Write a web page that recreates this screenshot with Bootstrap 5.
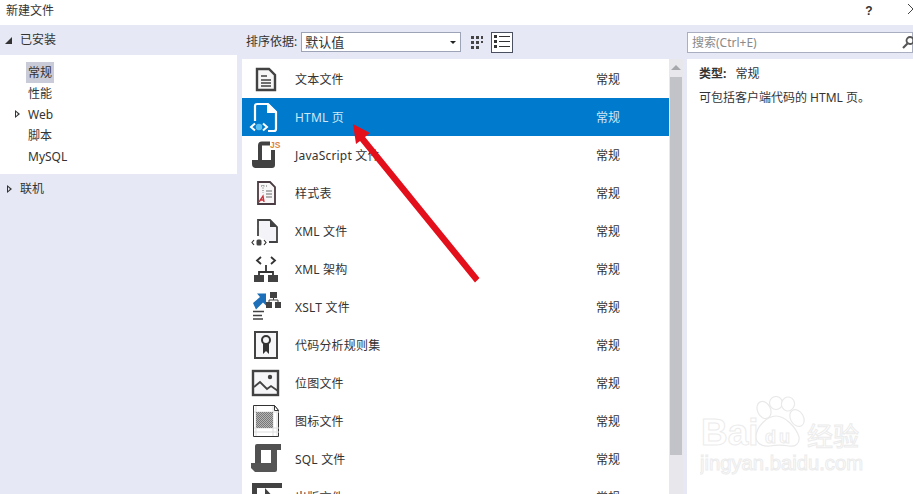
<!DOCTYPE html>
<html lang="zh">
<head>
<meta charset="utf-8">
<title>新建文件</title>
<link href="https://cdn.jsdelivr.net/npm/bootstrap@5.3.0/dist/css/bootstrap.min.css" rel="stylesheet">
<style>
html,body{height:494px;overflow:hidden;background:#fff}
body{font-family:"Noto Sans","Noto Sans CJK SC",sans-serif;font-size:12px;color:#333;line-height:16px;position:relative;width:913px}
.dlg-title{height:25px;padding:0 0 4px 6px}
.dlg-help{width:20px;font-family:"Liberation Sans",sans-serif;font-weight:700;text-align:center;margin-right:27px}
.dlg-close{width:7px;height:21px;overflow:hidden}
.dlg-body{height:469px;background:#e6e9f5}
.side{width:237px;flex:none}
.side-head{height:30px;padding-left:20px}
.tri-down{position:absolute;left:5px;width:0;height:0;border-style:solid;border-width:0 0 7px 7px;border-color:transparent transparent #333 transparent}
.tri-right{width:0;height:0;border-style:solid;border-width:4px 0 4px 5px;border-color:transparent transparent transparent #333;position:absolute}
.tri-right::after{content:"";position:absolute;left:-4px;top:-2px;border-style:solid;border-width:2px 0 2px 2.5px;border-color:transparent transparent transparent #e6e9f5}
.side-tree{background:#fff;height:119px;padding:7px 0 0 26px}
.tree-item{height:21px;padding-left:2px;line-height:21px;position:relative;width:28px;white-space:nowrap}
.tree-on{background:#c9cbd8}
.tree-web .tri-right{left:-11px;top:6px}
.tree-web .tri-right::after{border-left-color:#fff}
.side-link{height:30px;padding-left:20px;position:relative}
.side-link .tri-right{left:7px;top:11px}
.mid{width:446px;flex:none;margin-left:5px}
.tools{height:34px;padding-left:4px}
.sort-box{width:160px;height:20px;background:#fff;border:1px solid #9ea4b8;margin-left:4px;padding-left:3px;line-height:18px;font-size:13px;position:relative}
.caret-down{position:absolute;right:4px;top:8px;width:0;height:0;border-style:solid;border-width:3px 3px 0 3px;border-color:#222 transparent transparent}
.view-a{margin-left:10px;width:12px;height:14px}
.view-b{margin-left:8px;width:22px;height:21px;background:#fff;border:1px solid #4a5060}
.file-area{height:435px}
.file-list{width:427px;background:#fff;padding-top:1px;overflow:hidden}
.file-row{height:38px;flex:none;padding-left:6px;position:relative}
.file-row svg{flex:none;display:block}
.file-name{margin-left:7px;width:301px;font-size:12px;letter-spacing:.2px}
.file-row>span{padding-top:2px}
.file-row.active-row{background:#007acc;color:#cfe8f7}
.scroller{width:14px;background:#e8e8ec;position:relative}
.scroll-up{position:absolute;left:2px;top:6px;width:0;height:0;border-style:solid;border-width:0 5px 5px 5px;border-color:transparent transparent #a5a7ac}
.scroll-thumb{position:absolute;left:1px;right:1px;top:18px;height:378px;background:#c2c3c9}
.detail{background:#fff;width:226px;margin-left:4px;padding:7px 0 0 12px}
.detail-key{margin-right:3px}
.search-wrap{position:absolute;left:687px;top:32px;width:226px;height:21px}
.search-input.form-control{height:21px;border:1px solid #a9aec0;border-radius:0;background:#fff;font:12px/16px "Noto Sans","Noto Sans CJK SC",sans-serif;padding:0 4px;color:#777}
.search-input::placeholder{color:#8a8a8a;opacity:1}
.search-ico{position:absolute;right:-4px;top:3px}
.red-arrow{position:absolute;left:0;top:0;pointer-events:none}
.wm{position:absolute;left:700px;top:396px;width:213px;height:98px;pointer-events:none}
.wm text{fill:#fff;stroke:#ececec;stroke-width:1;font-family:"Liberation Sans","Noto Sans CJK SC",sans-serif}
</style>
</head>
<body>
<div class="dlg-title d-flex align-items-center">
  <span class="flex-grow-1">新建文件</span>
  <span class="dlg-help">?</span>
  <span class="dlg-close"><svg width="7" height="21"><path d="M2 4l5 5-5 5" stroke="#444" fill="none"/></svg></span>
</div>
<div class="dlg-body d-flex">
  <div class="side">
    <div class="side-head d-flex align-items-center position-relative"><span class="tri-down"></span>已安装</div>
    <div class="side-tree">
      <div class="tree-item tree-on">常规</div>
      <div class="tree-item">性能</div>
      <div class="tree-item tree-web"><span class="tri-right"></span>Web</div>
      <div class="tree-item">脚本</div>
      <div class="tree-item">MySQL</div>
    </div>
    <div class="side-link d-flex align-items-center"><span class="tri-right"></span>联机</div>
  </div>
  <div class="mid">
    <div class="tools d-flex align-items-center">
      <span>排序依据:</span>
      <div class="sort-box">默认值<span class="caret-down"></span></div>
      <svg class="view-a" viewBox="0 0 12 14"><path d="M0 1h3v3H0zM5 1h3v3H5zM10 1h2v3h-2zM0 6h3v3H0zM5 6h3v3H5zM10 6h2v2h-2zM0 11h3v3H0zM5 11h3v3H5z" fill="#444"/></svg>
      <div class="view-b d-flex align-items-center justify-content-center">
        <svg width="16" height="14" viewBox="0 0 16 14"><path d="M0 0h3v3H0zM0 5h3v3H0zM0 10h3v3H0z" fill="#333"/><path d="M5 1.500h11M5 6.500h11M5 11.500h11" stroke="#333"/></svg>
      </div>
    </div>
  </div>
</div>
<div class="position-absolute d-flex file-area" style="left:242px;top:59px">
  <div class="file-list d-flex flex-column">
    <div class="file-row d-flex align-items-center">
      <svg width="40" height="38" viewBox="0 0 40 38"><path d="M9 9h12l6 6v15H9z" fill="#f6f6f6" stroke="#424242" stroke-width="2.400"/><path d="M13 16h6M13 20h10M13 23h10M13 26h10" stroke="#424242" stroke-width="1.500"/></svg>
      <span class="file-name">文本文件</span><span>常规</span>
    </div>
    <div class="file-row active-row d-flex align-items-center">
      <svg width="40" height="38" viewBox="0 0 40 38"><path d="M7 23V8a2 2 0 0 1 2-2h11l8 8v17a2 2 0 0 1-2 2h-6" fill="none" stroke="#fff" stroke-width="2.200"/><path d="M19 6h2l7 7v2h-9z" fill="#fff"/><path d="M7 25.500l-4 3.500 4 3.500M15 25.500l4 3.500-4 3.500" fill="none" stroke="#fff" stroke-width="2"/><circle cx="11" cy="29" r="3.200" fill="#5cc0f0"/></svg>
      <span class="file-name">HTML 页</span><span>常规</span>
    </div>
    <div class="file-row d-flex align-items-center">
      <svg width="40" height="38" viewBox="0 0 40 38"><path d="M22 7.500H14a2 2 0 0 0-2 2V25" fill="none" stroke="#424242" stroke-width="4"/><path d="M4 24h19V14h4v15a3 3 0 0 1-3 3H8a4 4 0 0 1-4-4z" fill="#424242"/><text x="22" y="11.500" font-family="Liberation Sans" font-weight="700" font-size="8.500" fill="#dc8440">JS</text></svg>
      <span class="file-name">JavaScript 文件</span><span>常规</span>
    </div>
    <div class="file-row d-flex align-items-center">
      <svg width="40" height="38" viewBox="0 0 40 38"><path d="M10 8h12l5 5v17H10z" fill="#f8f6f6" stroke="#4a3a42" stroke-width="1.800"/><path d="M15 11v8M13 12h6" stroke="#666" stroke-dasharray="1 1.500"/><path d="M18 17h6M18 20h6M18 23h6" stroke="#6a6a6a" stroke-width="1.200"/><path d="M11 28l4-6 1 6M12.500 26h3" fill="none" stroke="#c8343c" stroke-width="1.400"/></svg>
      <span class="file-name">样式表</span><span>常规</span>
    </div>
    <div class="file-row d-flex align-items-center">
      <svg width="40" height="38" viewBox="0 0 40 38"><path d="M10 24V8h12l7 7v15H21" fill="#f4f4f8" stroke="#424242" stroke-width="1.800"/><path d="M22 8v7h7" fill="#424242"/><path d="M6 28l-2 2.500 2 2.500M16 28l2 2.500-2 2.500" fill="none" stroke="#333" stroke-width="1.200"/><rect x="8.500" y="27.500" width="5" height="6" rx="1.500" fill="#444"/></svg>
      <span class="file-name">XML 文件</span><span>常规</span>
    </div>
    <div class="file-row d-flex align-items-center">
      <svg width="40" height="38" viewBox="0 0 40 38"><path d="M13 7l-4 3.500 4 3.500M23 7l4 3.500-4 3.500" fill="none" stroke="#333" stroke-width="1.800"/><path d="M18 15v6M11 26v-4h14v4" fill="none" stroke="#333" stroke-width="1.800"/><path d="M6 25h10v7H6zM20 25h10v7H20z" fill="#424242"/></svg>
      <span class="file-name">XML 架构</span><span>常规</span>
    </div>
    <div class="file-row d-flex align-items-center">
      <svg width="40" height="38" viewBox="0 0 40 38"><path d="M5 15l7-6-3-3.500h9v12l-3-3-7 7z" fill="#1c6fb8"/><path d="M22 4h7v6h-7zM18 14h6v6h-6zM27 14h6v6h-6z" fill="#424242"/><path d="M21 15v-3h9v3M25.500 9v3" fill="none" stroke="#424242"/><path d="M5 23.500h11M5 27.500h9M5 31h10" stroke="#424242" stroke-width="1.600"/></svg>
      <span class="file-name">XSLT 文件</span><span>常规</span>
    </div>
    <div class="file-row d-flex align-items-center">
      <svg width="40" height="38" viewBox="0 0 40 38"><rect x="7" y="6" width="22" height="26" fill="#f6f6f8" stroke="#424242" stroke-width="2"/><circle cx="18" cy="14" r="4" fill="none" stroke="#333" stroke-width="2"/><path d="M15 18v10l3-3 3 3V18" fill="#333"/></svg>
      <span class="file-name">代码分析规则集</span><span>常规</span>
    </div>
    <div class="file-row d-flex align-items-center">
      <svg width="40" height="38" viewBox="0 0 40 38"><rect x="5" y="7" width="25" height="24" fill="#f6f6f8" stroke="#424242" stroke-width="2.400"/><circle cx="22" cy="13" r="2.200" fill="#424242"/><path d="M6 23l6-5 7 7 4-3 7 5" fill="none" stroke="#424242" stroke-width="1.800"/></svg>
      <span class="file-name">位图文件</span><span>常规</span>
    </div>
    <div class="file-row d-flex align-items-center">
      <svg width="40" height="38" viewBox="0 0 40 38"><defs><pattern id="dot" width="2" height="2" patternUnits="userSpaceOnUse"><rect width="2" height="2" fill="#b5b5b5"/><rect width="1" height="1" fill="#777"/><rect x="1" y="1" width="1" height="1" fill="#777"/></pattern></defs><path d="M5.500 3.500h21l4 5v26h-25z" fill="#fff" stroke="#333"/><path d="M6 10h25M6 26h25M6 30h25M8 4v30M25 4v30M29 9v25" stroke="#ddd"/><rect x="8" y="10" width="17" height="16" fill="url(#dot)"/><path d="M26.500 3.500v5h4z" fill="#fff" stroke="#333"/></svg>
      <span class="file-name">图标文件</span><span>常规</span>
    </div>
    <div class="file-row d-flex align-items-center">
      <svg width="40" height="38" viewBox="0 0 40 38"><path d="M33 4H9a2 2 0 0 0-2 2v17h6V10h20z" fill="#505050"/><path d="M23 10h6v20a2 2 0 0 1-2 2H7l-4-4v-5h20z" fill="#555"/></svg>
      <span class="file-name">SQL 文件</span><span>常规</span>
    </div>
    <div class="file-row d-flex align-items-center">
      <svg width="40" height="38" viewBox="0 0 40 38"><path d="M4 5h30v5H9v28H4z" fill="#424242"/><path d="M17 10l11 12H17z" fill="#424242"/></svg>
      <span class="file-name">出版文件</span><span>常规</span>
    </div>
  </div>
  <div class="scroller"><span class="scroll-up"></span><span class="scroll-thumb"></span></div>
  <div class="detail">
    <div class="mb-2"><b class="detail-key">类型:</b>&nbsp; 常规</div>
    <div>可包括客户端代码的 HTML 页。</div>
  </div>
</div>
<div class="search-wrap">
  <input class="form-control search-input" placeholder="搜索(Ctrl+E)">
  <svg class="search-ico" width="16" height="15" viewBox="0 0 16 15"><circle cx="9" cy="5.500" r="3.500" fill="none" stroke="#555" stroke-width="1.800"/><path d="M6.500 8.500L2 13" stroke="#555" stroke-width="2.200"/></svg>
</div>
<svg class="wm" viewBox="0 0 213 98">
  <text x="1" y="49" font-size="37" font-weight="700">Bai</text>
  <g fill="#fff" stroke="#e9e9e9" stroke-width="1.200">
    <ellipse cx="64" cy="14" rx="6.500" ry="9" transform="rotate(-25 64 14)"/>
    <ellipse cx="76" cy="7" rx="6.500" ry="6.500"/>
    <ellipse cx="88" cy="8" rx="6.500" ry="7" transform="rotate(15 88 8)"/>
    <ellipse cx="97" cy="22" rx="6.500" ry="9" transform="rotate(-30 97 22)"/>
    <path d="M56 41c0-10 11-21 20-21s20 11 23 21c1 7-4 10-10 9-6-1-13-1-19 0-8 1-14-3-14-9z"/>
  </g>
  <text x="65" y="47" font-size="18" font-weight="700" textLength="25">du</text>
  <text x="107" y="50" font-size="26" font-family="Noto Sans CJK SC">经验</text>
  <text x="0" y="74" font-size="20" textLength="163" lengthAdjust="spacingAndGlyphs">jingyan.baidu.com</text>
</svg>
<svg class="red-arrow" width="913" height="494"><path d="M353 124L370 133L365 137L479.500 278L475 282.500L360 141L356 144Z" fill="#e3101c"/></svg>
</body>
</html>
